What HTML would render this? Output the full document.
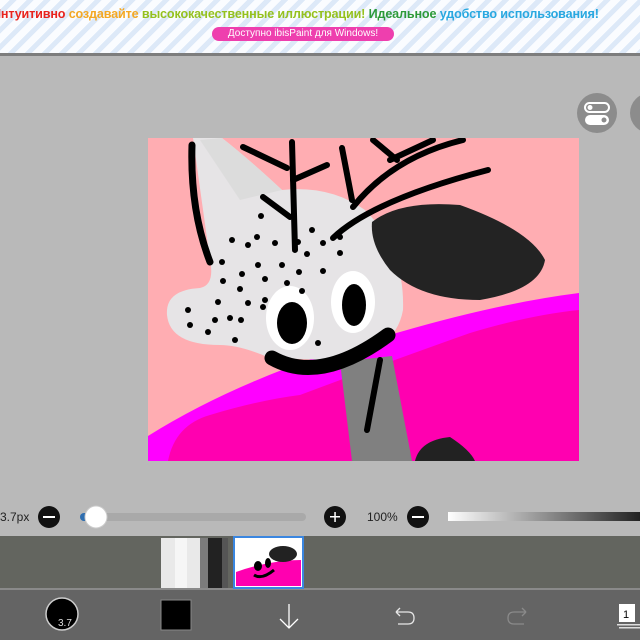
<!DOCTYPE html>
<html><head><meta charset="utf-8"><style>
*{margin:0;padding:0;box-sizing:border-box}
body{width:640px;height:640px;overflow:hidden;position:relative;background:#b9b9b9;font-family:"Liberation Sans","DejaVu Sans",sans-serif}
#banner{position:absolute;left:0;top:0;width:640px;height:53px;background:repeating-linear-gradient(135deg,#fafcff 0 7px,#dde9f8 7px 12px)}
#banner .t{position:absolute;top:7px;left:-8px;width:660px;white-space:nowrap;font-size:12.6px;font-weight:bold;letter-spacing:-0.15px}
#btn{position:absolute;left:212px;top:27px;width:182px;height:14px;border-radius:7px;background:#ee3fae;color:#fff;font-size:10px;text-align:center;line-height:14px}
#line{position:absolute;top:53px;left:0;width:640px;height:3px;background:#7d7d7d}
.txt{position:absolute;font-size:12px;color:#222}
</style></head><body>
<div id="banner"><div class="t"><span style="color:#e8231e">Интуитивно</span> <span style="color:#f4a823">создавайте</span> <span style="color:#95c11f">высококачественные иллюстрации!</span> <span style="color:#2d9a3a">Идеальное</span> <span style="color:#29a8e0">удобство использования!</span></div><div id="btn">Доступно ibisPaint для Windows!</div></div>
<div id="line"></div>
<svg width="640" height="640" style="position:absolute;left:0;top:0">
<defs><clipPath id="c"><rect x="148" y="138" width="431" height="323"/></clipPath>
<linearGradient id="g" x1="0" x2="1"><stop offset="0" stop-color="#fff"/><stop offset="1" stop-color="#222"/></linearGradient></defs>
<g clip-path="url(#c)">
<rect x="148" y="138" width="431" height="323" fill="#ffadb2"/>
<path d="M148,461 L148,436 Q250,372 400,332 Q500,303 579,293 L579,461Z" fill="#ff00ff"/>
<path d="M168,461 Q175,425 210,415 Q260,400 300,395 Q380,365 470,333 Q530,315 579,310 L579,461Z" fill="#ff00b0"/>
<path d="M340,362 L392,356 L412,461 L352,461Z" fill="#808080"/>
<path d="M415,461 Q420,440 450,437 Q470,450 475,461Z" fill="#222"/>
<path d="M193,138 L222,138 Q250,160 282,190 Q330,185 365,210 Q405,250 403,310 Q395,355 330,360 L270,358 Q240,345 220,345 Q170,345 167,315 Q165,290 200,288 Q215,285 210,260Z" fill="#e6e4e6"/>
<path d="M200,140 L222,138 Q250,160 282,190 L240,200Z" fill="#dcdcdc"/>
<path d="M372,222 Q400,200 460,205 Q530,230 545,260 Q540,290 480,300 Q420,300 390,270 Q370,245 372,222Z" fill="#232323"/>
<ellipse cx="290" cy="318" rx="24" ry="32" fill="#fff"/><ellipse cx="292" cy="323" rx="15" ry="21" fill="#000"/>
<ellipse cx="353" cy="302" rx="22" ry="31" fill="#fff"/><ellipse cx="354" cy="305" rx="12" ry="21" fill="#000"/>
<g stroke="#000" fill="none" stroke-linecap="round">
<path d="M272,358 Q320,385 388,335" stroke-width="15"/>
<path d="M192,145 Q190,210 210,262" stroke-width="7"/>
<g stroke-width="6"><path d="M243,147 L287,168"/><path d="M292,142 L295,250"/><path d="M293,180 L327,165"/><path d="M263,197 L290,217"/><path d="M342,148 L352,200"/><path d="M333,238 Q373,200 488,170"/><path d="M353,207 Q393,157 463,140"/><path d="M373,140 L397,160"/><path d="M390,160 L433,140"/><path d="M380,360 L367,430"/></g></g>
<g fill="#000">
<circle cx="261" cy="216" r="3"/><circle cx="257" cy="237" r="3"/><circle cx="232" cy="240" r="3"/><circle cx="248" cy="245" r="3"/><circle cx="275" cy="243" r="3"/><circle cx="298" cy="242" r="3"/><circle cx="323" cy="243" r="3"/><circle cx="340" cy="237" r="3"/><circle cx="312" cy="230" r="3"/><circle cx="307" cy="254" r="3"/><circle cx="340" cy="253" r="3"/><circle cx="222" cy="262" r="3"/><circle cx="258" cy="265" r="3"/><circle cx="282" cy="265" r="3"/><circle cx="299" cy="272" r="3"/><circle cx="323" cy="271" r="3"/><circle cx="242" cy="274" r="3"/><circle cx="265" cy="279" r="3"/><circle cx="302" cy="291" r="3"/><circle cx="223" cy="281" r="3"/><circle cx="240" cy="289" r="3"/><circle cx="287" cy="283" r="3"/><circle cx="218" cy="302" r="3"/><circle cx="248" cy="303" r="3"/><circle cx="265" cy="300" r="3"/><circle cx="188" cy="310" r="3"/><circle cx="215" cy="320" r="3"/><circle cx="241" cy="320" r="3"/><circle cx="263" cy="307" r="3"/><circle cx="190" cy="325" r="3"/><circle cx="208" cy="332" r="3"/><circle cx="235" cy="340" r="3"/><circle cx="318" cy="343" r="3"/><circle cx="230" cy="318" r="3"/></g>
</g>
<circle cx="597" cy="113" r="20" fill="#8c8c8c"/>
<rect x="585" y="103" width="24" height="9" rx="4.5" fill="none" stroke="#fff" stroke-width="2"/><circle cx="590" cy="107.5" r="2.5" fill="#fff"/>
<rect x="585" y="115" width="24" height="10" rx="5" fill="#fff"/><circle cx="604" cy="120" r="2.5" fill="#8c8c8c"/>
<circle cx="650" cy="113" r="20" fill="#8c8c8c"/>
<circle cx="49" cy="517" r="11" fill="#111"/><rect x="43" y="516" width="12" height="2" fill="#fff"/>
<rect x="80" y="513" width="226" height="8" rx="4" fill="#a9a9a9"/><rect x="80" y="513" width="14" height="8" rx="4" fill="#2f6eb0"/>
<circle cx="96" cy="517" r="11" fill="#fff" stroke="#ccc"/>
<circle cx="335" cy="517" r="11" fill="#111"/><rect x="330" y="516" width="10" height="1.5" fill="#fff"/><rect x="334.3" y="512" width="1.5" height="10" fill="#fff"/>
<circle cx="418" cy="517" r="11" fill="#111"/><rect x="412" y="516" width="12" height="2" fill="#fff"/>
<rect x="448" y="512" width="192" height="9" fill="url(#g)"/>
<rect x="0" y="536" width="640" height="53" fill="#63655f"/>
<rect x="0" y="588" width="640" height="2" fill="#8a8a8a"/>
<rect x="161" y="538" width="44" height="50" fill="#e9e9e9"/><rect x="175" y="538" width="12" height="50" fill="#f6f6f6"/><rect x="200" y="538" width="8" height="50" fill="#7c7c7c"/><rect x="208" y="538" width="20" height="50" fill="#222"/><rect x="222" y="538" width="6" height="50" fill="#555"/>
<rect x="234" y="537" width="69" height="51" fill="#fff" stroke="#3a86e0" stroke-width="2"/>
<path d="M236,586 L236,572 Q270,560 301,560 L301,586Z" fill="#ff00b0"/>
<ellipse cx="283" cy="554" rx="14" ry="8" fill="#222"/>
<ellipse cx="258" cy="566" rx="4" ry="5" fill="#000"/><ellipse cx="268" cy="563" rx="3" ry="5" fill="#000"/>
<path d="M254,575 Q262,580 274,570" stroke="#000" stroke-width="3" fill="none"/>
<rect x="0" y="590" width="640" height="50" fill="#646464"/>
<circle cx="62" cy="614" r="16" fill="#000" stroke="#ccc" stroke-width="1.5"/>
<text x="58" y="626" font-size="10" fill="#ddd" font-family="Liberation Sans">3.7</text>
<rect x="161" y="600" width="30" height="30" fill="#000" stroke="#888"/>
<path d="M289,604 L289,628 M280,619 L289,628 L298,619" stroke="#fff" stroke-width="1.3" fill="none"/>
<path d="M396,612 L408,612 Q414,612 414,618 Q414,624 408,624 L398,624 M396,612 L400,608 M396,612 L400,616" stroke="#e6e6e6" stroke-width="1.3" fill="none"/>
<path d="M526,612 L514,612 Q508,612 508,618 Q508,624 514,624 L524,624 M526,612 L522,608 M526,612 L522,616" stroke="#8a8a8a" stroke-width="1.3" fill="none"/>
<rect x="619" y="604" width="16" height="18" fill="#fff"/><text x="623" y="618" font-size="11" fill="#000">1</text>
<rect x="617" y="624" width="23" height="1.5" fill="#ddd"/><rect x="619" y="627" width="21" height="1.5" fill="#ddd"/>
</svg>
<div class="txt" style="left:0;top:510px">3.7px</div>
<div class="txt" style="left:367px;top:510px">100%</div>
</body></html>
